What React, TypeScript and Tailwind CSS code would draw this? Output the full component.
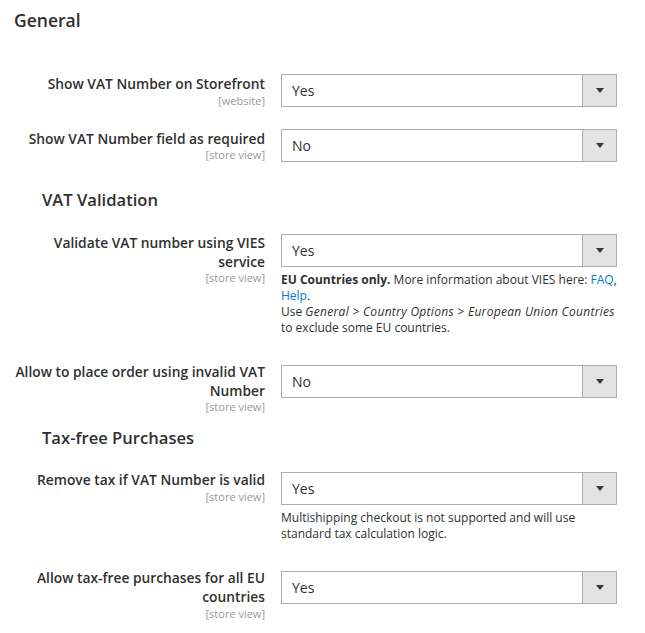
import React from "react";

const font = { fontFamily: '"Open Sans", "Liberation Sans", sans-serif' };

function Select({ value }: { value: string }) {
  return (
    <div className="flex h-[33px] w-[336px] shrink-0 border border-[#adadad] bg-white">
      <div className="flex flex-1 items-center pl-[10px] text-[14px] text-[#303030]">{value}</div>
      <div className="flex w-[34px] items-center justify-center border-l border-[#adadad] bg-[#e3e3e3]">
        <svg width="8" height="5" viewBox="0 0 8 5">
          <polygon points="0,0 8,0 4,5" fill="#41362f" />
        </svg>
      </div>
    </div>
  );
}

function Row({
  label,
  scope,
  value,
  note,
  className,
  labelClass,
}: {
  label: string;
  scope: string;
  value: string;
  note?: React.ReactNode;
  className: string;
  labelClass: string;
}) {
  return (
    <div className={`flex items-start ${className}`}>
      <div className={`ml-[11px] w-[254px] shrink-0 text-right ${labelClass}`}>
        <div className="text-[13.8px] font-semibold leading-[18.6px] text-[#303030]">{label}</div>
        <div className="text-[11px] leading-[14px] text-[#999999]">{scope}</div>
      </div>
      <div className="ml-[16px] flex flex-col">
        <Select value={value} />
        {note}
      </div>
    </div>
  );
}

export default function App() {
  return (
    <div className="min-h-[633px] w-[645px] bg-white pt-[10px]" style={font}>
      <h2 className="ml-[14px] text-[17.5px] font-semibold leading-[20px] text-[#303030]">General</h2>
      <Row
        className="mt-[44px]"
        labelClass="mt-[1px]"
        label="Show VAT Number on Storefront"
        scope="[website]"
        value="Yes"
      />
      <Row
        className="mt-[21px]"
        labelClass="mt-[1px]"
        label="Show VAT Number field as required"
        scope="[store view]"
        value="No"
      />
      <h3 className="ml-[42px] mt-[28px] text-[16.6px] font-semibold leading-[20px] text-[#303030]">
        VAT Validation
      </h3>
      <Row
        className="mt-[24px]"
        labelClass="mt-0"
        label="Validate VAT number using VIES service"
        scope="[store view]"
        value="Yes"
        note={
          <div className="mt-[5px] w-[340px] text-[12px] leading-[16px] text-[#303030]">
            <strong className="font-bold">EU Countries only.</strong> More information about VIES here:{" "}
            <a className="text-[#007bdb]">FAQ</a>, <a className="text-[#007bdb]">Help</a>.
            <br />
            Use <em className="tracking-[0.3px]">General &gt; Country Options &gt; European Union Countries</em>
            <br />
            to exclude some EU countries.
          </div>
        }
      />
      <Row
        className="mt-[29px]"
        labelClass="-mt-[2px]"
        label="Allow to place order using invalid VAT Number"
        scope="[store view]"
        value="No"
      />
      <h3 className="ml-[42px] mt-[14px] text-[16.6px] font-semibold leading-[20px] text-[#303030]">
        Tax-free Purchases
      </h3>
      <Row
        className="mt-[24px]"
        labelClass="-mt-[1px]"
        label="Remove tax if VAT Number is valid"
        scope="[store view]"
        value="Yes"
        note={
          <div className="mt-[5px] w-[336px] text-[12px] leading-[16px] text-[#303030]">
            Multishipping checkout is not supported and will use standard tax calculation logic.
          </div>
        }
      />
      <Row
        className="mt-[29px]"
        labelClass="-mt-[2px]"
        label="Allow tax-free purchases for all EU countries"
        scope="[store view]"
        value="Yes"
      />
    </div>
  );
}
